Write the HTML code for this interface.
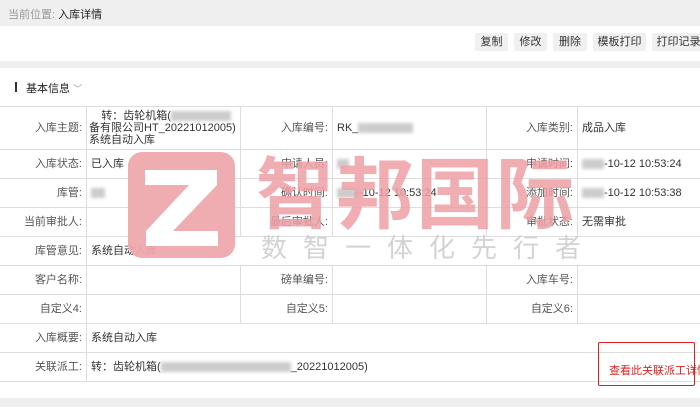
<html><head><style>
body{margin:0;width:700px;height:412px;overflow:hidden;background:#fff;font-family:"Liberation Sans","Noto Sans CJK SC",sans-serif;font-size:11px;color:#333;position:relative}
.a{position:absolute}
.btn{position:absolute;top:33px;height:18px;line-height:18px;background:#f0f0f0;border-radius:2px;text-align:center;font-size:11px;color:#333}
table{position:absolute;top:106px;left:-1px;border-collapse:collapse;width:702px;table-layout:fixed}
tr{height:29px}
td{border:1px solid #ddd;padding:0 4px;font-size:11px;color:#333;line-height:12px}
td.l{text-align:right;color:#555}
.bl{display:inline-block;background:#ccc;filter:blur(1.5px);height:10px;vertical-align:middle}
</style></head><body>
<div class="a" style="left:0;top:0;width:700px;height:26px;background:#efefef"></div>
<div class="a" style="left:8px;top:6px;font-size:11px;color:#999">当前位置: <span style="color:#222">入库详情</span></div>
<div class="btn" style="left:475px;width:33px">复制</div>
<div class="btn" style="left:514px;width:33px">修改</div>
<div class="btn" style="left:553px;width:34px">删除</div>
<div class="btn" style="left:593px;width:53px">模板打印</div>
<div class="btn" style="left:652px;width:53px">打印记录</div>
<div class="a" style="left:0;top:61px;width:700px;height:7px;background:#efefef"></div>
<div class="a" style="left:15px;top:82px;width:2px;height:10px;background:#333"></div>
<div class="a" style="left:26px;top:80px;font-size:11px;color:#222">基本信息 <span style="color:#999;font-size:9px">﹀</span></div>
<table>
<colgroup><col style="width:87px"><col style="width:154px"><col style="width:92px"><col style="width:154px"><col style="width:91px"><col></colgroup>
<tr style="height:43px"><td class="l">入库主题:</td><td style="padding-left:2px">&nbsp;&nbsp;&nbsp;&nbsp;转：齿轮机箱(<span class="bl" style="width:60px"></span><br>备有限公司HT_20221012005)系统自动入库</td><td class="l">入库编号:</td><td>RK_<span class="bl" style="width:55px"></span></td><td class="l">入库类别:</td><td>成品入库</td></tr>
<tr><td class="l">入库状态:</td><td>已入库</td><td class="l">申请人员:</td><td><span class="bl" style="width:12px"></span></td><td class="l">申请时间:</td><td><span class="bl" style="width:22px"></span>-10-12 10:53:24</td></tr>
<tr><td class="l">库管:</td><td><span class="bl" style="width:14px"></span></td><td class="l">确认时间:</td><td><span class="bl" style="width:22px"></span>-10-12 10:53:24</td><td class="l">添加时间:</td><td><span class="bl" style="width:22px"></span>-10-12 10:53:38</td></tr>
<tr><td class="l">当前审批人:</td><td></td><td class="l">最后审批人:</td><td></td><td class="l">审批状态:</td><td>无需审批</td></tr>
<tr><td class="l">库管意见:</td><td colspan="5">系统自动入库</td></tr>
<tr><td class="l">客户名称:</td><td></td><td class="l">磅单编号:</td><td></td><td class="l">入库车号:</td><td></td></tr>
<tr><td class="l">自定义4:</td><td></td><td class="l">自定义5:</td><td></td><td class="l">自定义6:</td><td></td></tr>
<tr><td class="l">入库概要:</td><td colspan="5">系统自动入库</td></tr>
<tr><td class="l">关联派工:</td><td colspan="5">转：齿轮机箱(<span class="bl" style="width:130px"></span>_20221012005)</td></tr>
</table>
<div class="a" style="left:609px;top:362px;color:#e02020;font-size:11px;white-space:nowrap">查看此关联派工详情</div>
<div class="a" style="left:598px;top:342px;width:95px;height:42px;border:1.5px solid #e02020;border-radius:2px"></div>
<div class="a" style="left:0;top:398px;width:700px;height:9px;background:#efefef"></div>
<svg class="a" style="left:128px;top:152px" width="107" height="106" viewBox="0 0 107 106"><rect width="107" height="106" rx="14" fill="#eea9ae" opacity="0.95"/><path d="M17 18H89V33L45 79H90V94H18V79L61 33H17Z" fill="#fff"/></svg>
<div class="a" style="left:256px;top:144px;font-size:78px;font-weight:bold;color:#eea0a6;opacity:0.85;letter-spacing:2px;font-family:'Noto Sans CJK SC',sans-serif;line-height:90px;white-space:nowrap">智邦国际</div>
<div class="a" style="left:261px;top:230px;font-size:26px;color:#ccc;letter-spacing:16px;font-family:'Noto Sans CJK SC',sans-serif;line-height:34px;white-space:nowrap;opacity:0.85">数智一体化先行者</div>
</body></html>
